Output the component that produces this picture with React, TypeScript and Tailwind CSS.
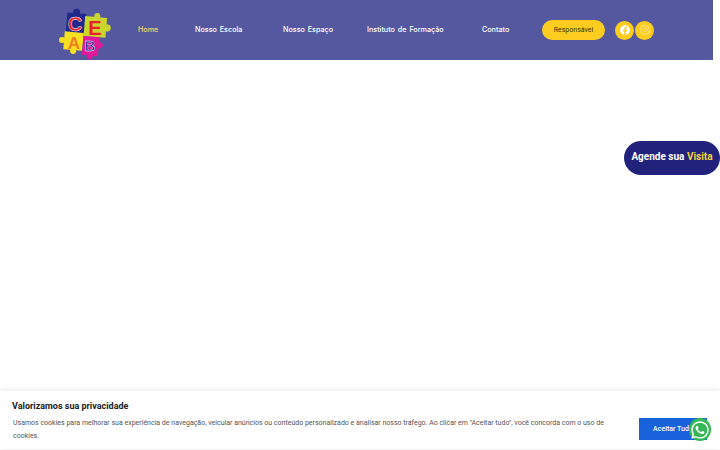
import { Instagram } from 'lucide-react';
import { FaFacebook, FaWhatsapp } from 'react-icons/fa';

const navItems = [
  { label: 'Home', width: 'w-[57px]', color: 'text-[#f5d76e]' },
  { label: 'Nosso Escola', width: 'w-[88px]', color: 'text-white' },
  { label: 'Nosso Espaço', width: 'w-[84px]', color: 'text-white' },
  { label: 'Instituto de Formação', width: 'w-[115px]', color: 'text-white' },
  { label: 'Contato', width: 'w-[60px]', color: 'text-white' },
];

function Logo() {
  const font = 'Liberation Sans, sans-serif';
  return (
    <svg width="50" height="50" viewBox="0 0 50 50" className="shrink-0 overflow-visible">
      <g transform="rotate(5 25 25)">
        <rect x="6" y="9" width="19" height="20" fill="#1f2a8c" />
        <circle cx="15" cy="8" r="3.5" fill="#1f2a8c" />
        <rect x="24" y="11" width="22" height="20" fill="#c8d62e" />
        <circle cx="47" cy="21" r="3.5" fill="#c8d62e" />
        <circle cx="36" cy="10" r="3" fill="#c8d62e" />
        <rect x="5" y="28" width="19" height="18" fill="#f7e01f" />
        <circle cx="3" cy="37" r="3" fill="#f7e01f" />
        <circle cx="15" cy="47" r="3" fill="#f7e01f" />
        <rect x="24" y="31" width="16" height="19" fill="#e0189a" />
        <circle cx="32" cy="51" r="3" fill="#e0189a" />
        <circle cx="41" cy="39" r="3" fill="#e0189a" />
      </g>
      <text x="15" y="26" textAnchor="middle" fontFamily={font} fontWeight="700" fontSize="20" fill="#e8212b" stroke="#ffffff" strokeWidth="0.4">C</text>
      <text x="35" y="30" textAnchor="middle" fontFamily={font} fontWeight="700" fontSize="20" fill="#e8212b">E</text>
      <text x="14" y="44" textAnchor="middle" fontFamily={font} fontWeight="700" fontSize="17" fill="#f07f24">A</text>
      <text x="30" y="46" textAnchor="middle" fontFamily={font} fontWeight="700" fontSize="15" fill="#2b2f9e" stroke="#ffffff" strokeWidth="0.4">B</text>
    </svg>
  );
}

export default function App() {
  return (
    <div className="relative h-[450px] w-[720px] overflow-hidden bg-white font-['Roboto',sans-serif]">
      <header className="flex h-[60px] w-[713px] items-center bg-[#55589f] pl-[60px]">
        <Logo />
        <nav className="ml-[28px] flex items-center pt-[1px] font-['Inter',sans-serif] text-[7.2px] font-medium [word-spacing:1px]">
          {navItems.map((item) => (
            <a key={item.label} className={`${item.width} ${item.color} whitespace-nowrap`}>
              {item.label}
            </a>
          ))}
        </nav>
        <a className="flex h-5 w-[63px] items-center justify-center rounded-full bg-[#fccd1e] text-[7px] text-[#3a3410]">
          Responsável
        </a>
        <div className="ml-[10px] flex items-center gap-[1px]">
          <span className="flex h-[19px] w-[19px] items-center justify-center rounded-full bg-[#fccd1e] text-white">
            <FaFacebook size={10} />
          </span>
          <span className="flex h-[19px] w-[19px] items-center justify-center rounded-full bg-[#fccd1e] text-[#fdeeb0]">
            <Instagram size={10} strokeWidth={1.6} />
          </span>
        </div>
      </header>

      <a className="absolute right-0 top-[141px] flex h-[34px] w-[96px] items-center justify-center rounded-[17px] bg-[#22227c] pb-[3px] text-[10px] font-bold text-white">
        Agende sua&nbsp;<span className="text-[#f5d33a]">Visita</span>
      </a>

      <div className="absolute bottom-[1px] left-0 flex h-[58px] w-[720px] items-center bg-white pl-[13px] shadow-[0_0_6px_rgba(0,0,0,0.12)]">
        <div className="w-[600px] pt-[2px]">
          <h2 className="mb-[4px] -ml-[1px] text-[9px] font-bold leading-[14px] text-[#212121]">Valorizamos sua privacidade</h2>
          <p className="w-[595px] text-[7px] leading-[13px] text-[#555]">
            Usamos cookies para melhorar sua experiência de navegação, veicular anúncios ou conteúdo personalizado e analisar nosso tráfego. Ao clicar em "Aceitar tudo", você concorda com o uso de cookies.
          </p>
        </div>
        <button className="ml-[26px] mt-[18px] flex h-[22px] w-[68px] shrink-0 items-center justify-center whitespace-nowrap bg-[#1863dc] text-[7px] font-medium text-white">
          Aceitar Tudo
        </button>
      </div>

      <span className="absolute left-[689px] top-[418px] flex h-[23px] w-[22px] items-center justify-center rounded-full bg-[#35b85a] text-white">
        <FaWhatsapp size={20} />
      </span>
    </div>
  );
}
